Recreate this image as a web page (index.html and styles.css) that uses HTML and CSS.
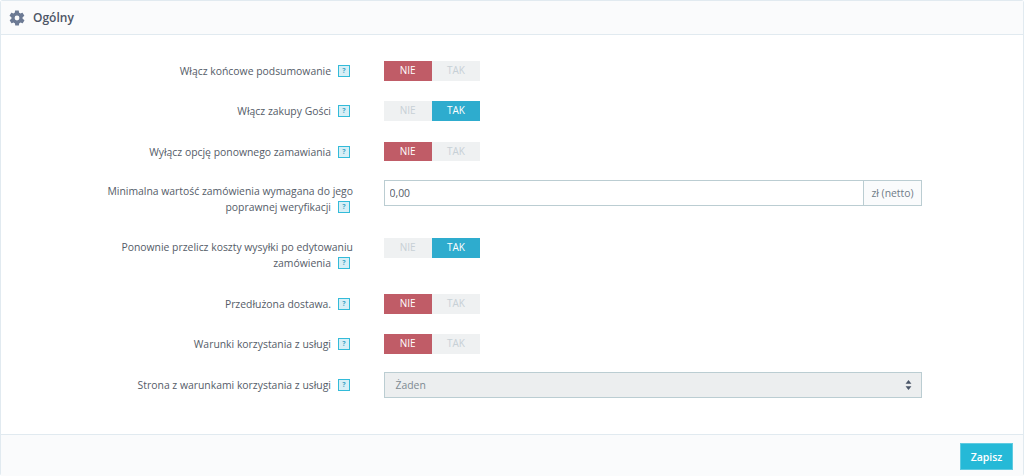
FILE: index.html
```html
<!DOCTYPE html>
<html lang="pl">
<head>
<meta charset="utf-8">
<title>Ogólny</title>
<link rel="stylesheet" href="styles.css">
</head>
<body>
<div class="panel">
  <div class="head">
    <svg class="gear" viewBox="0 0 24 24" width="18" height="18"><path fill="#6c7a94" fill-rule="evenodd" d="M19.400 13c.1-.3.1-.7.1-1s0-.7-.1-1l2.100-1.600c.2-.2.3-.4.1-.7l-2-3.500c-.1-.2-.4-.3-.6-.2l-2.500 1c-.5-.4-1.100-.7-1.700-1l-.4-2.600c0-.2-.3-.4-.5-.4h-4c-.2 0-.5.2-.5.4l-.4 2.600c-.6.3-1.200.6-1.700 1l-2.500-1c-.2-.1-.5 0-.6.2l-2 3.500c-.1.3-.1.500.1.700L4.600 11c-.1.300-.1.700-.1 1s0 .7.1 1l-2.100 1.600c-.2.200-.3.400-.1.700l2 3.500c.1.200.4.300.6.200l2.500-1c.5.400 1.100.700 1.700 1l.4 2.600c0 .2.300.4.500.4h4c.2 0 .5-.2.5-.4l.4-2.600c.6-.3 1.200-.6 1.700-1l2.500 1c.2.100.5 0 .6-.2l2-3.500c.1-.3.1-.5-.1-.7L19.400 13zM12 15.200a3.200 3.200 0 1 1 0-6.400 3.200 3.200 0 0 1 0 6.400z"/></svg>
    <span class="title">Ogólny</span>
  </div>
  <div class="body">
    <div class="row r1">
      <div class="label">Włącz końcowe podsumowanie<i class="help">?</i></div>
      <div class="switch"><span class="opt no">NIE</span><span class="opt">TAK</span></div>
    </div>
    <div class="row r2">
      <div class="label">Włącz zakupy Gości<i class="help">?</i></div>
      <div class="switch"><span class="opt">NIE</span><span class="opt yes">TAK</span></div>
    </div>
    <div class="row r3">
      <div class="label">Wyłącz opcję ponownego zamawiania<i class="help">?</i></div>
      <div class="switch"><span class="opt no">NIE</span><span class="opt">TAK</span></div>
    </div>
    <div class="row r4">
      <div class="label">Minimalna wartość zamówienia wymagana do jego poprawnej weryfikacji<i class="help">?</i></div>
      <div class="group"><input class="input" type="text" value="0,00"><span class="addon">zł (netto)</span></div>
    </div>
    <div class="row r5">
      <div class="label">Ponownie przelicz koszty wysyłki po edytowaniu zamówienia<i class="help">?</i></div>
      <div class="switch"><span class="opt">NIE</span><span class="opt yes">TAK</span></div>
    </div>
    <div class="row r6">
      <div class="label">Przedłużona dostawa.<i class="help">?</i></div>
      <div class="switch"><span class="opt no">NIE</span><span class="opt">TAK</span></div>
    </div>
    <div class="row r7">
      <div class="label">Warunki korzystania z usługi<i class="help">?</i></div>
      <div class="switch"><span class="opt no">NIE</span><span class="opt">TAK</span></div>
    </div>
    <div class="row r8">
      <div class="label">Strona z warunkami korzystania z usługi<i class="help">?</i></div>
      <div class="select"><span>Żaden</span><svg viewBox="0 0 8 12" width="7" height="10"><path fill="#4a5568" d="M4 0l3.500 4.500h-7zM4 12L.5 7.500h7z"/></svg></div>
    </div>
  </div>
  <div class="foot"><button class="save" type="button">Zapisz</button></div>
</div>
</body>
</html>
```
FILE: styles.css
```css
* { box-sizing: border-box; }
html, body { margin: 0; padding: 0; background: #fff; }
body {
  height: 476px;
  overflow: hidden;
  font-family: "Open Sans", sans-serif;
  font-size: 10.4px;
  color: #555c68;
}
.panel {
  height: 476px;
  display: flex;
  flex-direction: column;
  border: 1px solid #e1eaf0;
  border-bottom: 0;
  border-radius: 3px;
}
.head {
  height: 34px;
  flex: none;
  display: flex;
  align-items: center;
  gap: 7px;
  padding-left: 7px;
  background: #fafbfc;
  border-bottom: 1px solid #e1eaf0;
}
.gear { display: block; }
.title { font-size: 12px; font-weight: 600; color: #4d5566; }
.body { flex: 1; padding-top: 26px; }
.row { display: flex; align-items: flex-start; }
.r2 { margin-top: 20.5px; }
.r3 { margin-top: 21px; }
.r4 { margin-top: 19px; }
.r5 { margin-top: 23px; }
.r6 { margin-top: 23px; }
.r7 { margin-top: 20.5px; }
.r8 { margin-top: 18.5px; }
.label {
  width: 352px;
  padding-left: 100px;
  margin-right: 30.5px;
  text-align: right;
  line-height: 16px;
  padding-top: 2px;
  flex: none;
}
.r4 .label { padding-top: 3px; }
.r5 .label { padding-top: 1px; }
.r8 .label { padding-top: 5px; }
.help {
  display: inline-block;
  width: 12px;
  height: 12px;
  margin: -3px 3px -1px 7px;
  border: 1.5px solid #33bbd9;
  background: #d8eff6;
  color: #3fa6c6;
  font-style: normal;
  font-weight: 700;
  font-size: 7px;
  line-height: 9px;
  text-align: center;
  vertical-align: middle;
}
.switch {
  display: flex;
  width: 96.5px;
  height: 19.5px;
  background: #eff1f2;
}
.opt {
  flex: 1;
  text-align: center;
  line-height: 19.5px;
  font-size: 10px;
  color: #c7d0d6;
}
.opt.no { background: #c05c67; color: #fff; }
.opt.yes { background: #2eacce; color: #fff; }
.group { display: flex; width: 538.5px; height: 26px; }
.input {
  flex: 1;
  min-width: 0;
  height: 26px;
  padding: 0 5px;
  border: 1px solid #bbcdd2;
  border-right: 0;
  outline: 0;
  background: #fff;
  font: 10.4px "Open Sans", sans-serif;
  color: #555c68;
}
.addon {
  width: 59px;
  display: flex;
  align-items: center;
  justify-content: center;
  border: 1px solid #bbcdd2;
  background: #fafbfc;
  color: #707c88;
}
.select {
  width: 538.5px;
  height: 26px;
  display: flex;
  align-items: center;
  justify-content: space-between;
  padding: 0 9px 0 11px;
  background: #eceeef;
  border: 1px solid #bbcdd2;
  color: #7e8a92;
}
.foot {
  height: 42px;
  flex: none;
  display: flex;
  justify-content: flex-end;
  align-items: flex-start;
  padding: 8px 10px 0 0;
  background: #fafbfc;
  border-top: 1px solid #e1eaf0;
}
.save {
  width: 53px;
  height: 27px;
  padding: 0;
  border: 1px solid #5fcbe1;
  background: #25b9d7;
  color: #fff;
  font: 600 10.5px "Open Sans", sans-serif;
}
```
